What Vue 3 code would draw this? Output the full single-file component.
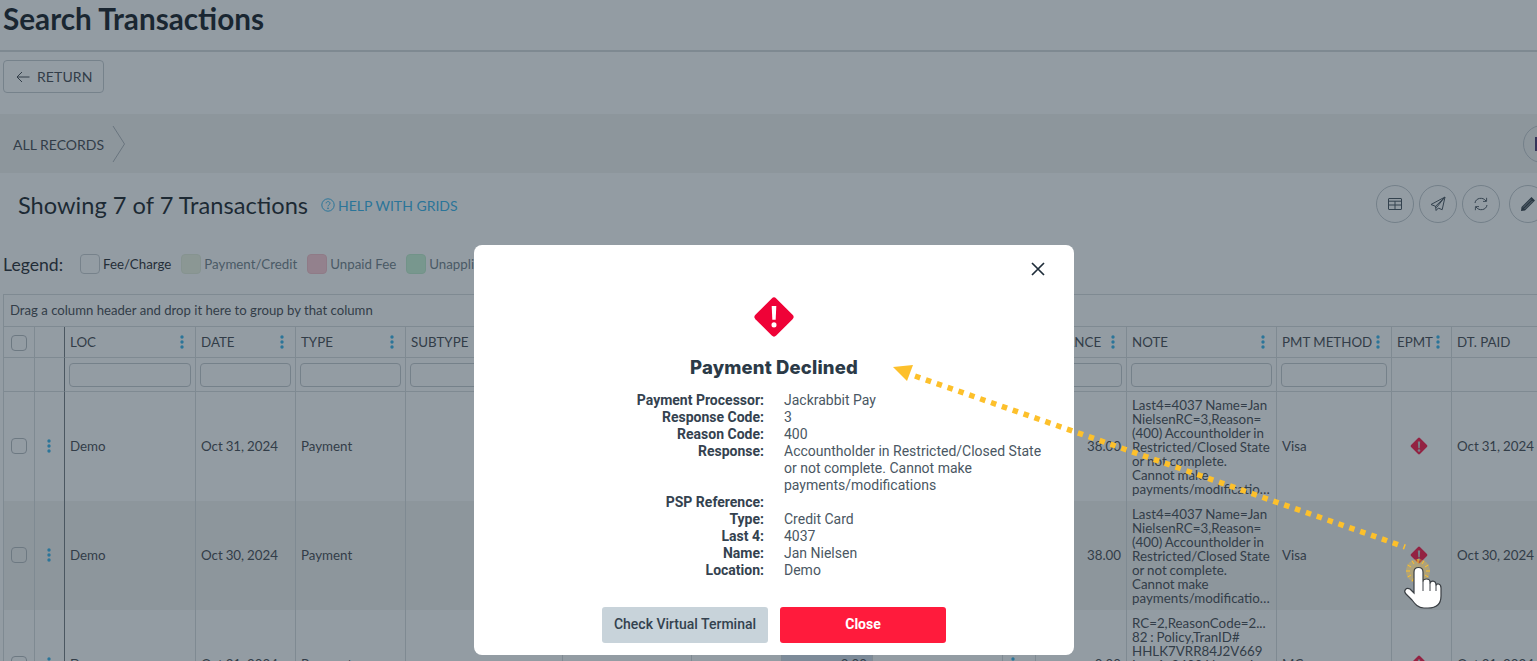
<script setup>
const cols = [31, 30, 131, 100, 110, 157, 129, 90, 91, 130, 33, 91, 150, 115, 60, 100]
const headers = [
  { label: '', key: 'check' }, { label: '', key: 'spacer' },
  { label: 'LOC', menu: true, filter: true }, { label: 'DATE', menu: true, filter: true },
  { label: 'TYPE', menu: true, filter: true }, { label: 'SUBTYPE', menu: true, filter: true },
  { label: '', filter: true }, { label: '', filter: true }, { label: '', filter: true },
  { label: '', filter: true }, { label: '', filter: false },
  { label: 'BALANCE', menu: true, filter: true }, { label: 'NOTE', menu: true, filter: true },
  { label: 'PMT METHOD', menu: true, filter: true }, { label: 'EPMT', menu: true, filter: false },
  { label: 'DT. PAID', filter: false }
]
const declined = 'Last4=4037 Name=Jan NielsenRC=3,Reason=(400) Accountholder in Restricted/Closed State or not complete. Cannot make payments/modifications'
const rows = [
  { id: 1, date: 'Oct 31, 2024', amount: '38.00', note: declined, method: 'Visa', paid: 'Oct 31, 2024' },
  { id: 2, date: 'Oct 30, 2024', amount: '38.00', note: declined, method: 'Visa', paid: 'Oct 30, 2024', hover: true },
  { id: 3, date: 'Oct 21, 2024', amount: '0.00', note: 'RC=2,ReasonCode=2... 82 : Policy,TranID# HHLK7VRR84J2V669 Last4=8400 Name=Jan Nielsen Declined by policy rule, contact the processor', method: 'MC', paid: 'Oct 21, 2024', tinted: true }
]
const details = [
  ['Payment Processor:', 'Jackrabbit Pay'],
  ['Response Code:', '3'],
  ['Reason Code:', '400'],
  ['Response:', 'Accountholder in Restricted/Closed State or not complete. Cannot make payments/modifications'],
  ['PSP Reference:', ''],
  ['Type:', 'Credit Card'],
  ['Last 4:', '4037'],
  ['Name:', 'Jan Nielsen'],
  ['Location:', 'Demo']
]
const legend = [
  { label: 'Fee/Charge', cls: 'sw-fee' },
  { label: 'Payment/Credit', cls: 'sw-pay', muted: true },
  { label: 'Unpaid Fee', cls: 'sw-unpaid', muted: true },
  { label: 'Unapplied', cls: 'sw-unapplied', muted: true }
]
const rays = Array.from({ length: 12 }, (_, i) => {
  const a = (i * Math.PI) / 6
  return {
    x1: 1418 + Math.cos(a) * 8, y1: 571 + Math.sin(a) * 8,
    x2: 1418 + Math.cos(a) * 12, y2: 571 + Math.sin(a) * 12
  }
})
</script>

<template>
  <div class="page">
    <h1 class="title">Search Transactions</h1>
    <div class="toolbar">
      <button class="return">
        <svg width="14" height="12" viewBox="0 0 14 12" fill="none" stroke="currentColor" stroke-width="1">
          <path d="M13.5 6H1M6 1 1 6l5 5" />
        </svg>
        RETURN
      </button>
    </div>
    <div class="band">
      <span class="crumb">ALL RECORDS</span>
      <svg class="chev" width="14" height="36" viewBox="0 0 14 36" fill="none" stroke="#a9afb4">
        <path d="M1 0 12.5 18 1 36" />
      </svg>
      <span class="circle band-btn"><i class="purple"></i></span>
    </div>
    <div class="heading">
      <h2>Showing 7 of 7 Transactions</h2>
      <a class="help">
        <svg width="14" height="14" viewBox="0 0 14 14" fill="none" stroke="currentColor">
          <circle cx="7" cy="7" r="6.2" />
          <path d="M5.1 5.4C5.1 3 9 3 9 5.3 9 6.8 7 6.7 7 8.4" />
          <circle cx="7" cy="10.3" r=".5" />
        </svg>
        HELP WITH GRIDS
      </a>
      <div class="actions">
        <span class="circle">
          <svg width="16" height="14" viewBox="0 0 16 14" fill="none" stroke="#3f4a55">
            <rect x="1.5" y="1.5" width="13" height="11" rx=".5" />
            <path d="M1.5 4.2h13M1.5 8h13M8 4.2v8.3" />
          </svg>
        </span>
        <span class="circle">
          <svg width="16" height="16" viewBox="0 0 16 16" fill="none" stroke="#3f4a55">
            <path d="M15 1 1 8.5l4.5 1.8L15 1 6.5 11.5l-1-1.2.6 4.2 2.2-2.4 3.9 1.6z" />
          </svg>
        </span>
        <span class="circle">
          <svg width="16" height="16" viewBox="0 0 16 16" fill="none" stroke="#3f4a55">
            <path d="M2 7C2.6 1.8 10 .6 13 5M14 9c-.6 5.200-8 6.400-11 2" />
            <path d="M13.600 1.800V5.400H10M2.400 14.200V10.600H6" stroke-width=".9" />
          </svg>
        </span>
        <span class="circle gap">
          <svg width="16" height="16" viewBox="0 0 16 16">
            <path d="M11.500 1 15 4.500 5 14.500 1 15l.5-4z" fill="#2b343d" />
            <path d="M3 11.500 11 3.500M4.500 13l8-8" stroke="#a9b0b6" stroke-width=".8" />
          </svg>
        </span>
      </div>
    </div>
    <div class="legend">
      <span class="legend-title">Legend:</span>
      <span v-for="item in legend" :key="item.label" class="legend-item" :class="{ muted: item.muted }">
        <i class="swatch" :class="item.cls"></i>{{ item.label }}
      </span>
    </div>
    <div class="grid-wrap">
      <div class="group-bar">Drag a column header and drop it here to group by that column</div>
      <table class="grid">
        <colgroup>
          <col v-for="(w, i) in cols" :key="i" :style="{ width: w + 'px' }" />
        </colgroup>
        <thead>
          <tr class="head">
            <th v-for="(h, i) in headers" :key="i" :class="{ frozen: i === 1 }">
              <i v-if="h.key === 'check'" class="check"></i>
              <span v-else class="th-in">
                <span>{{ h.label }}</span>
                <svg v-if="h.menu" class="kebab" width="4" height="14" viewBox="0 0 4 14"><circle cx="2" cy="2" r="1.700" /><circle cx="2" cy="7" r="1.700" /><circle cx="2" cy="12" r="1.700" /></svg>
              </span>
            </th>
          </tr>
          <tr class="filters">
            <th v-for="(h, i) in headers" :key="i" :class="{ frozen: i === 1 }">
              <input v-if="h.filter" type="text" />
            </th>
          </tr>
        </thead>
        <tbody>
          <tr v-for="r in rows" :key="r.id" class="row" :class="{ hover: r.hover }">
            <td class="center"><i class="check"></i></td>
            <td class="center frozen menu-cell">
              <svg class="kebab" width="4" height="14" viewBox="0 0 4 14"><circle cx="2" cy="2" r="1.700" /><circle cx="2" cy="7" r="1.700" /><circle cx="2" cy="12" r="1.700" /></svg>
            </td>
            <td>Demo</td>
            <td>{{ r.date }}</td>
            <td>Payment</td>
            <td></td>
            <td></td>
            <td></td>
            <td class="num" :class="{ tint: r.tinted }">{{ r.tinted ? r.amount : '' }}</td>
            <td></td>
            <td class="mark-cell">
              <svg v-if="r.tinted" class="kebab" width="4" height="14" viewBox="0 0 4 14"><circle cx="2" cy="2" r="1.700" /><circle cx="2" cy="7" r="1.700" /><circle cx="2" cy="12" r="1.700" /></svg>
            </td>
            <td class="num">{{ r.amount }}</td>
            <td class="note-cell"><div class="note">{{ r.note }}</div></td>
            <td>{{ r.method }}</td>
            <td class="center epmt">
              <svg class="alert" width="18" height="18" viewBox="0 0 40 40">
                <rect x="6" y="6" width="28" height="28" rx="3" transform="rotate(45 20 20)" fill="#ff0a3c" />
                <path d="M17.500 10h5l-.8 15h-3.400z" fill="#c7c9cc" />
                <circle cx="20" cy="30" r="2.800" fill="#c7c9cc" />
              </svg>
            </td>
            <td>{{ r.paid }}</td>
          </tr>
        </tbody>
      </table>
    </div>

    <div class="backdrop">
      <section class="modal">
        <button class="x" aria-label="Close">
          <svg width="14" height="14" viewBox="0 0 14 14" stroke="#1f2d3a" stroke-width="1.700" fill="none">
            <path d="M1 1l12 12M13 1 1 13" />
          </svg>
        </button>
        <svg class="big-alert" width="42" height="42" viewBox="0 0 40 40">
          <rect x="6" y="6" width="28" height="28" rx="3" transform="rotate(45 20 20)" fill="#ef0237" />
          <path d="M17.800 9.500h4.400l-.6 13h-3.200z" fill="#fff" />
          <circle cx="20" cy="27.500" r="2.400" fill="#fff" />
        </svg>
        <h3>Payment Declined</h3>
        <div class="details">
          <template v-for="d in details" :key="d[0]">
            <b>{{ d[0] }}</b>
            <span>{{ d[1] }}</span>
          </template>
        </div>
        <div class="modal-actions">
          <button class="btn grey">Check Virtual Terminal</button>
          <button class="btn red">Close</button>
        </div>
      </section>
    </div>

    <svg class="annot" viewBox="0 0 1537 661" width="1537" height="661">
      <polygon points="893,367 913,365 907,381" fill="#fdc02b" />
      <line x1="915" y1="376" x2="1405" y2="547" stroke="#fdc02b" stroke-width="5.500" stroke-dasharray="5.500 6" />
      <circle cx="1418" cy="571" r="12" fill="#fdc02b" opacity=".3" />
      <line v-for="(l, i) in rays" :key="i" :x1="l.x1" :y1="l.y1" :x2="l.x2" :y2="l.y2" stroke="#fdc02b" stroke-width="1" />
      <path d="M1414 572C1414 566 1423 566 1423 572V582C1423 578 1430 578 1430 582V584C1430 580 1436 580 1436 585V586C1436 583 1441 583 1441 588V596C1441 604 1436 608 1428 608H1424C1418 608 1415 604 1412 600L1406 594C1403 591 1406 587 1410 589L1414 593Z" fill="#fff" stroke="#3a3f44" stroke-width="1.200" />
      <path d="M1423 582V591M1430 584V591M1436 586V591" stroke="#3a3f44" fill="none" />
    </svg>
  </div>
</template>

<style scoped>
.page {
  position: relative;
  width: 1537px;
  height: 661px;
  overflow: hidden;
  background: #fff;
  font-family: Lato, "Liberation Sans", sans-serif;
  font-size: 14px;
  color: #3c4148;
}
.title {
  margin: 0;
  height: 50px;
  padding-left: 3px;
  box-sizing: content-box;
  border-bottom: 2px solid #d4d8db;
  font-size: 29.700px;
  line-height: 37px;
  font-weight: 700;
  color: #0c121a;
}
.toolbar { height: 62px; padding: 8px 0 0 3px; box-sizing: border-box; }
.return {
  display: flex;
  align-items: center;
  gap: 7px;
  width: 101px;
  height: 33px;
  padding: 0 0 0 12px;
  box-sizing: border-box;
  border: 1px solid #c5cacf;
  border-radius: 4px;
  background: transparent;
  font: 14px Lato, sans-serif;
  color: #3c4148;
  letter-spacing: .1px;
}
.band {
  position: relative;
  display: flex;
  align-items: center;
  height: 59px;
  padding-left: 13px;
  background: #f3f2f1;
}
.crumb { margin-top: 2px; }
.chev { margin-left: 8px; }
.band-btn { position: absolute; left: 1523px; top: 11px; }
.purple { position: absolute; left: 11px; top: 11px; width: 12px; height: 14px; background: #40306a; }
.circle {
  display: inline-flex;
  align-items: center;
  justify-content: center;
  flex: none;
  width: 38px;
  height: 38px;
  box-sizing: border-box;
  border: 1px solid #c0c6cb;
  border-radius: 50%;
}
.heading {
  position: relative;
  display: flex;
  align-items: center;
  height: 64px;
  padding: 0 0 1px 18px;
  box-sizing: border-box;
}
.heading h2 {
  margin: 0;
  font-size: 23.650px;
  font-weight: 400;
  color: #12181f;
}
.help {
  display: flex;
  align-items: center;
  gap: 3px;
  margin: 1px 0 0 13px;
  color: #2fb0ea;
  font-size: 14px;
}
.actions {
  position: absolute;
  left: 1376px;
  top: 12px;
  display: flex;
  gap: 5px;
}
.actions .gap { margin-left: 4px; }
.legend {
  display: flex;
  align-items: center;
  height: 20px;
  margin-top: 17px;
  padding-left: 3px;
  font-size: 13.300px;
  color: #1c2228;
}
.legend-title { width: 77px; font-size: 17.600px; color: #1b2128; }
.legend-item { display: inline-flex; align-items: center; margin-right: 10px; gap: 3px; }
.legend-item.muted { color: #6d7a84; }
.swatch {
  width: 20px;
  height: 20px;
  box-sizing: border-box;
  border: 1px solid #c6cbcf;
  border-radius: 4px;
}
.sw-pay { background: #eef5e0; border-color: #e4ecd8; }
.sw-unpaid { background: #ffc9d2; border-color: #f6bcc6; }
.sw-unapplied { background: #c8f5d4; border-color: #bdecca; }
.grid-wrap {
  width: 1534px;
  margin: 20px 0 0 3px;
  border-left: 1px solid #d6dadd;
  overflow: hidden;
}
.group-bar {
  height: 33px;
  box-sizing: border-box;
  line-height: 30px;
  padding-left: 6px;
  border-top: 1px solid #d6dadd;
  border-bottom: 1px solid #d6dadd;
  font-size: 13.150px;
  color: #3c4148;
}
.grid {
  table-layout: fixed;
  width: 1548px;
  border-collapse: separate;
  border-spacing: 0;
}
th, td {
  box-sizing: border-box;
  border-right: 1px solid #d6dadd;
  border-bottom: 1px solid #d6dadd;
  padding: 0 5px;
  font-weight: 400;
  text-align: left;
  overflow: hidden;
  white-space: nowrap;
}
.frozen { border-right-color: #6f757b; }
.head th { height: 31px; font-size: 13.330px; }
.th-in { display: flex; align-items: center; justify-content: space-between; padding-right: 6px; }
.kebab { display: block; fill: #2fb0ea; flex: none; }
.filters th { height: 34px; padding: 0 4px; }
.filters input {
  display: block;
  width: 100%;
  height: 24px;
  box-sizing: border-box;
  border: 1px solid #c3c8cc;
  border-radius: 4px;
  background: transparent;
}
.head th:first-child, .center { text-align: center; padding: 0; }
.row td { height: 109px; padding-bottom: 2px; font-size: 13.330px; word-spacing: -.5px; border-bottom: 0; }
.row.hover td { background: #f3f2f1; }
.center .kebab { margin: 0 auto; }
.center .alert { display: block; margin: 0 auto; }
.row .menu-cell { padding-right: 1px; }
.row .epmt { padding-right: 6px; }
.check {
  display: inline-block;
  width: 16px;
  height: 16px;
  box-sizing: border-box;
  border: 1px solid #b2b8bd;
  border-radius: 4px;
  vertical-align: middle;
}
.num { text-align: right; }
.tint { background: #d3ddea; }
.row .mark-cell { padding-left: 8px; }
.row .note-cell { white-space: normal; padding-bottom: 0; }
.note {
  display: -webkit-box;
  -webkit-box-orient: vertical;
  -webkit-line-clamp: 7;
  overflow: hidden;
  overflow-wrap: anywhere;
  line-height: 14px;
  white-space: normal;
}
.backdrop {
  position: absolute;
  inset: 0;
  padding: 245px 0 0 474px;
  box-sizing: border-box;
  background: rgba(39, 57, 72, .5);
}
.modal {
  position: relative;
  display: flex;
  flex-direction: column;
  align-items: center;
  width: 600px;
  height: 410px;
  box-sizing: border-box;
  padding-top: 51px;
  border-radius: 8px;
  background: #fff;
  font-family: Roboto, sans-serif;
  font-size: 14px;
  color: #4a5763;
}
.x {
  position: absolute;
  right: 29px;
  top: 17px;
  width: 14px;
  height: 14px;
  padding: 0;
  border: 0;
  background: none;
}
.big-alert { display: block; flex: none; }
.modal h3 {
  margin: 16px 0 0;
  height: 26px;
  font: 800 18.500px/26px Inter, sans-serif;
  letter-spacing: .15px;
  color: #2b3a47;
}
.details {
  display: grid;
  grid-template-columns: 290px 265px;
  column-gap: 20px;
  align-self: flex-start;
  margin-top: 12px;
  line-height: 17px;
}
.details b { text-align: right; font-weight: 700; color: #34424f; }
.details span { min-height: 17px; }
.modal-actions {
  position: absolute;
  left: 128px;
  top: 362px;
  display: flex;
  gap: 12px;
}
.btn {
  width: 166px;
  height: 36px;
  padding: 0 0 2px;
  border: 0;
  border-radius: 3px;
  font: 500 14px Roboto, sans-serif;
}
.grey { background: #c8d3da; color: #34424f; }
.red { background: #ff1b3c; color: #fff; font-weight: 700; }
.annot { position: absolute; left: 0; top: 0; pointer-events: none; }
</style>

<style>
html, body { margin: 0; overflow: hidden; }
</style>
